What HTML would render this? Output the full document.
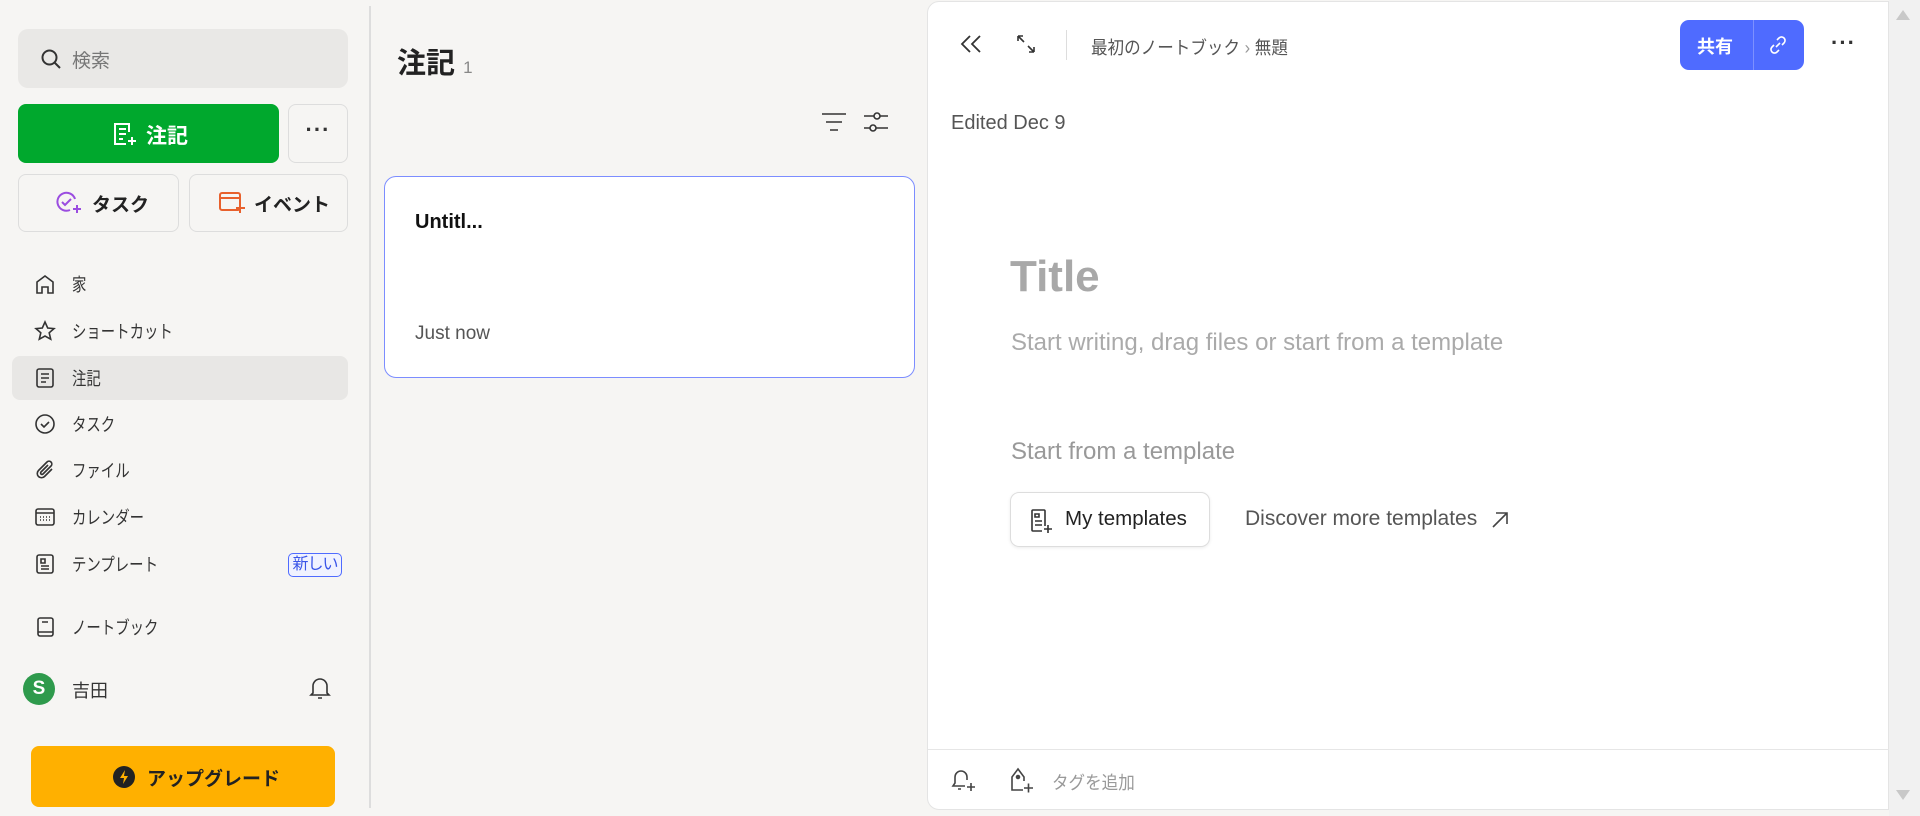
<!DOCTYPE html>
<html><head><meta charset="utf-8"><style>
*{box-sizing:border-box;margin:0;padding:0}
body{width:1920px;height:816px;background:#f6f5f3;font-family:"Liberation Sans","Noto Sans CJK JP",sans-serif;color:#333;position:relative;overflow:hidden}
.a{position:absolute}
svg{display:block}
.nav{position:absolute;left:12px;width:336px;height:44px;display:flex;align-items:center;font-size:18px;color:#333}
.nav svg{position:absolute;left:22px}
.nav span{position:absolute;left:60px;transform:scaleX(0.8);transform-origin:left center}
</style></head><body>
<!-- sidebar -->
<div class="a" style="left:18px;top:29px;width:330px;height:59px;background:#e9e8e6;border-radius:10px"></div>
<svg class="a" style="left:40px;top:48px" width="22" height="22" viewBox="0 0 22 22" fill="none" stroke="#333" stroke-width="2"><circle cx="9.5" cy="9.5" r="7"/><path d="M15 15l5 5"/></svg>
<div class="a" style="left:72px;top:46px;font-size:19px;color:#777">検索</div>
<div class="a" style="left:18px;top:104px;width:261px;height:59px;background:#00a82d;border-radius:8px"></div>
<svg class="a" style="left:112px;top:121px" width="26" height="26" viewBox="0 0 26 26" fill="none" stroke="#fff" stroke-width="2"><path d="M17 11V3H3v20h11M7 8h7M7 13h7M7 18h4M16 20h8M20 16v8"/></svg>
<div class="a" style="left:146px;top:120px;font-size:21px;color:#fff;font-weight:bold">注記</div>
<div class="a" style="left:288px;top:104px;width:60px;height:59px;border:1px solid #ddd;border-radius:8px;text-align:center;line-height:50px;font-size:22px;font-weight:bold;letter-spacing:1px">···</div>
<div class="a" style="left:18px;top:174px;width:161px;height:58px;border:1px solid #ddd;border-radius:8px"></div>
<svg class="a" style="left:55px;top:191px" width="28" height="24" viewBox="0 0 28 24" fill="none" stroke="#9b4de0" stroke-width="2"><path d="M20 8A9 9 0 1 0 15 19M7 11l3 3 6-6M18 18h8M22 14v8"/></svg>
<div class="a" style="left:92px;top:190px;font-size:19px;font-weight:bold;color:#222">タスク</div>
<div class="a" style="left:189px;top:174px;width:159px;height:58px;border:1px solid #ddd;border-radius:8px"></div>
<svg class="a" style="left:218px;top:190px" width="28" height="24" viewBox="0 0 28 24" fill="none" stroke="#e8602c" stroke-width="2"><rect x="2" y="3" width="20" height="17" rx="2"/><path d="M2 8h20M18 18h9M22 14v9" /></svg>
<div class="a" style="left:254px;top:190px;font-size:19px;font-weight:bold;color:#222">イベント</div>

<div class="nav" style="top:262px"><svg width="22" height="22" viewBox="0 0 22 22" fill="none" stroke="#333" stroke-width="1.6"><path d="M3 20V9l8-6 8 6v11h-5v-6H8v6z"/></svg><span>家</span></div>
<div class="nav" style="top:309px"><svg width="22" height="22" viewBox="0 0 22 22" fill="none" stroke="#333" stroke-width="1.6"><path d="M11 2l2.7 6 6.3.6-4.8 4.2 1.5 6.4L11 16l-5.7 3.2 1.5-6.4L2 8.6 8.3 8z"/></svg><span>ショートカット</span></div>
<div class="nav" style="top:356px;background:#e8e7e5;border-radius:8px"><svg width="22" height="22" viewBox="0 0 22 22" fill="none" stroke="#333" stroke-width="1.6"><rect x="3" y="2" width="16" height="18" rx="2"/><path d="M7 7h8M7 11h8M7 15h5"/></svg><span>注記</span></div>
<div class="nav" style="top:402px"><svg width="22" height="22" viewBox="0 0 22 22" fill="none" stroke="#333" stroke-width="1.6"><circle cx="11" cy="11" r="9"/><path d="M7 11l3 3 5-5"/></svg><span>タスク</span></div>
<div class="nav" style="top:448px"><svg width="22" height="22" viewBox="0 0 22 22" fill="none" stroke="#333" stroke-width="1.6"><path d="M18 10l-7.5 7.5a4 4 0 0 1-6-6L13 3a2.7 2.7 0 0 1 4 4l-8 8a1.3 1.3 0 0 1-2-2l7-7"/></svg><span>ファイル</span></div>
<div class="nav" style="top:495px"><svg width="22" height="22" viewBox="0 0 22 22" fill="none" stroke="#333" stroke-width="1.6"><rect x="2" y="3" width="18" height="16" rx="2"/><path d="M2 7h18M6 11h1M9 11h1M12 11h1M15 11h1M6 14h1M9 14h1M12 14h1M15 14h1"/></svg><span>カレンダー</span></div>
<div class="nav" style="top:542px"><svg width="22" height="22" viewBox="0 0 22 22" fill="none" stroke="#333" stroke-width="1.6"><rect x="3" y="2" width="16" height="18" rx="2"/><path d="M7 6h4v4H7zM7 13h8M7 16h8"/></svg><span>テンプレート</span>
<div class="a" style="left:276px;top:11px;width:54px;height:24px;border:1px solid #4f6bff;border-radius:5px;color:#3a55e8;font-size:16px;text-align:center;line-height:22px;background:#f0f2ff;letter-spacing:-1px">新しい</div></div>
<div class="nav" style="top:605px"><svg width="22" height="22" viewBox="0 0 22 22" fill="none" stroke="#333" stroke-width="1.6"><rect x="4" y="2" width="15" height="18" rx="2"/><path d="M4 16h15M8 6h6"/></svg><span>ノートブック</span></div>
<div class="a" style="left:23px;top:673px;width:32px;height:32px;border-radius:50%;background:#2e9a4c;color:#fff;font-weight:bold;font-size:19px;text-align:center;line-height:32px">S</div>
<div class="a" style="left:72px;top:677px;font-size:18px">吉田</div>
<svg class="a" style="left:308px;top:675px" width="24" height="26" viewBox="0 0 24 26" fill="none" stroke="#333" stroke-width="1.6"><path d="M5 18V11a7 7 0 0 1 14 0v7l2 2H3zM10 23h4"/></svg>
<div class="a" style="left:31px;top:746px;width:304px;height:61px;background:#ffb000;border-radius:8px"></div>
<svg class="a" style="left:112px;top:765px" width="24" height="24" viewBox="0 0 24 24"><circle cx="12" cy="12" r="11" fill="#222"/><path d="M13 5l-5 8h4l-1 6 5-8h-4z" fill="#ffb000"/></svg>
<div class="a" style="left:147px;top:764px;font-size:19px;font-weight:bold;color:#222">アップグレード</div>
<div class="a" style="left:369px;top:6px;width:2px;height:802px;background:#ddd"></div>

<!-- middle -->
<div class="a" style="left:397px;top:40px;font-size:29px;font-weight:bold;color:#222">注記 <span style="font-size:17px;font-weight:normal;color:#888">1</span></div>
<svg class="a" style="left:820px;top:110px" width="28" height="24" viewBox="0 0 28 24" fill="none" stroke="#333" stroke-width="1.6"><path d="M2 4h24M6 12h16M10 20h8"/></svg>
<svg class="a" style="left:862px;top:108px" width="28" height="28" viewBox="0 0 28 28" fill="none" stroke="#333" stroke-width="1.6"><path d="M2 8h10M18 8h8M2 20h6M14 20h12"/><circle cx="15" cy="8" r="3"/><circle cx="11" cy="20" r="3"/></svg>
<div class="a" style="left:384px;top:176px;width:531px;height:202px;background:#fff;border:1px solid #7c8dff;border-radius:12px"></div>
<div class="a" style="left:415px;top:211px;font-size:20px;font-weight:bold;color:#111">Untitl...</div>
<div class="a" style="left:415px;top:323px;font-size:19px;color:#555">Just now</div>

<!-- right -->
<div class="a" style="left:927px;top:1px;width:962px;height:809px;background:#fff;border:1px solid #e4e4e4;border-radius:12px 0 0 12px"></div>
<div class="a" style="left:1889px;top:0;width:31px;height:816px;background:#f1f1f1"></div>
<div class="a" style="left:1896px;top:10px;width:0;height:0;border-left:7px solid transparent;border-right:7px solid transparent;border-bottom:10px solid #c8c8c8"></div>
<div class="a" style="left:1896px;top:790px;width:0;height:0;border-left:7px solid transparent;border-right:7px solid transparent;border-top:10px solid #c8c8c8"></div>
<svg class="a" style="left:960px;top:34px" width="24" height="20" viewBox="0 0 24 20" fill="none" stroke="#333" stroke-width="1.8"><path d="M10 2l-8 8 8 8M20 2l-8 8 8 8"/></svg>
<svg class="a" style="left:1015px;top:33px" width="22" height="22" viewBox="0 0 22 22" fill="none" stroke="#333" stroke-width="1.6"><path d="M3 3l6 6M3 3v5M3 3h5M19 19l-6-6M19 19v-5M19 19h-5"/></svg>
<div class="a" style="left:1066px;top:30px;width:1px;height:30px;background:#ddd"></div>
<div class="a" style="left:1091px;top:34px;font-size:18px;color:#555;transform:scaleX(0.92);transform-origin:left">最初のノートブック <span style="color:#999">&#8250;</span> 無題</div>
<div class="a" style="left:1680px;top:20px;width:124px;height:50px;background:#4f6bff;border-radius:9px"></div>
<div class="a" style="left:1753px;top:20px;width:1px;height:50px;background:#7d90ff"></div>
<div class="a" style="left:1697px;top:33px;font-size:18px;font-weight:bold;color:#fff">共有</div>
<svg class="a" style="left:1767px;top:34px" width="22" height="22" viewBox="0 0 22 22" fill="none" stroke="#fff" stroke-width="1.6"><path d="M9 13l4-4M10 6l2-2a3.5 3.5 0 0 1 5 5l-2 2M12 16l-2 2a3.5 3.5 0 0 1-5-5l2-2"/></svg>
<div class="a" style="left:1831px;top:30px;font-size:22px;font-weight:bold;color:#333;letter-spacing:1px">···</div>
<div class="a" style="left:951px;top:112px;font-size:20px;color:#555">Edited Dec 9</div>
<div class="a" style="left:1010px;top:252px;font-size:44px;font-weight:bold;color:#a8a8a8">Title</div>
<div class="a" style="left:1011px;top:329px;font-size:24px;color:#aaa">Start writing, drag files or start from a template</div>
<div class="a" style="left:1011px;top:438px;font-size:24px;color:#999">Start from a template</div>
<div class="a" style="left:1010px;top:492px;width:200px;height:55px;border:1px solid #ddd;border-radius:9px;box-shadow:0 1px 3px rgba(0,0,0,.08)"></div>
<svg class="a" style="left:1030px;top:508px" width="24" height="26" viewBox="0 0 24 26" fill="none" stroke="#333" stroke-width="1.6"><path d="M15 18V3a1 1 0 0 0-1-1H3a1 1 0 0 0-1 1v19a1 1 0 0 0 1 1h9"/><path d="M5 6h4v3H5zM5 13h7M5 17h7M14 21h8M18 17v8"/></svg>
<div class="a" style="left:1065px;top:507px;font-size:20.5px;color:#222">My templates</div>
<div class="a" style="left:1245px;top:507px;font-size:21px;color:#555">Discover more templates</div>
<svg class="a" style="left:1490px;top:510px" width="20" height="20" viewBox="0 0 20 20" fill="none" stroke="#444" stroke-width="1.6"><path d="M3 17L17 3M6 3h11v11"/></svg>
<div class="a" style="left:928px;top:749px;width:961px;height:1px;background:#e6e6e6"></div>
<svg class="a" style="left:950px;top:767px" width="26" height="26" viewBox="0 0 26 26" fill="none" stroke="#444" stroke-width="1.6"><path d="M15 19H3l2-3v-6a6 6 0 0 1 12 0v3M8 22h3M17 20h8M21 16v8"/></svg>
<svg class="a" style="left:1008px;top:766px" width="28" height="28" viewBox="0 0 28 28" fill="none" stroke="#444" stroke-width="1.6"><path d="M15 24H4V11l6-8 6 8v4"/><circle cx="10" cy="11" r="1.5" fill="#444"/><path d="M16 22h9M20.5 17.5v9"/></svg>
<div class="a" style="left:1052px;top:769px;font-size:18px;color:#999;transform:scaleX(0.92);transform-origin:left">タグを追加</div>
</body></html>
